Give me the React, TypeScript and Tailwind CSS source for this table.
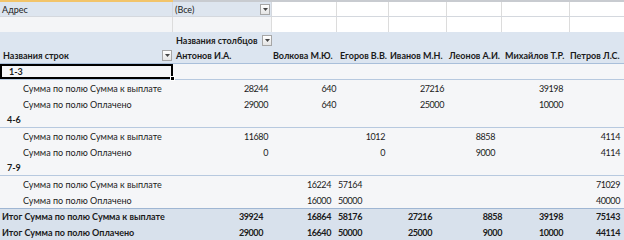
const font = { fontFamily: 'Lato, "Open Sans", sans-serif' };

function Drop() {
  return (
    <span className="flex h-[11px] w-[10px] items-center justify-center border border-[#a6a6a6] bg-gradient-to-b from-white to-[#e4e4e4]">
      <svg width="5" height="3" viewBox="0 0 5 3">
        <path d="M0 0h5L2.5 3z" fill="#444" />
      </svg>
    </span>
  );
}

type Row = {
  label: string;
  kind: 'group' | 'item' | 'total';
  vals: string[];
  pads: string[];
};

const padsA = ['pr-[4px]', 'pr-[1px]', 'pr-[4px]', 'pr-[3px]', 'pr-[7px]', 'pr-[7px]', 'pr-[4px]'];
const padsC = ['pr-[4px]', 'pr-[6px]', 'pr-[27px]', 'pr-[3px]', 'pr-[7px]', 'pr-[7px]', 'pr-[4px]'];
const padsT = ['pr-[9px]', 'pr-[6px]', 'pr-[27px]', 'pr-[15px]', 'pr-0', 'pr-[7px]', 'pr-[4px]'];

const rows: Row[] = [
  { label: '1-3', kind: 'group', vals: [], pads: [] },
  { label: 'Сумма по полю Сумма к выплате', kind: 'item', vals: ['28244', '640', '', '27216', '', '39198', ''], pads: padsA },
  { label: 'Сумма по полю Оплачено', kind: 'item', vals: ['29000', '640', '', '25000', '', '10000', ''], pads: padsA },
  { label: '4-6', kind: 'group', vals: [], pads: [] },
  { label: 'Сумма по полю Сумма к выплате', kind: 'item', vals: ['11680', '', '1012', '', '8858', '', '4114'], pads: padsA },
  { label: 'Сумма по полю Оплачено', kind: 'item', vals: ['0', '', '0', '', '9000', '', '4114'], pads: padsA },
  { label: '7-9', kind: 'group', vals: [], pads: [] },
  { label: 'Сумма по полю Сумма к выплате', kind: 'item', vals: ['', '16224', '57164', '', '', '', '71029'], pads: padsC },
  { label: 'Сумма по полю Оплачено', kind: 'item', vals: ['', '16000', '50000', '', '', '', '40000'], pads: padsC },
  { label: 'Итог Сумма по полю Сумма к выплате', kind: 'total', vals: ['39924', '16864', '58176', '27216', '8858', '39198', '75143'], pads: padsT },
  { label: 'Итог Сумма по полю Оплачено', kind: 'total', vals: ['29000', '16640', '50000', '25000', '9000', '10000', '44114'], pads: padsT },
];

const names = [
  { n: 'Антонов И.А.', c: 'pl-[3px]' },
  { n: 'Волкова М.Ю.', c: 'pl-[1px]' },
  { n: 'Егоров В.В.', c: 'pl-[3px]' },
  { n: 'Иванов М.Н.', c: 'pl-[1px]' },
  { n: 'Леонов А.И.', c: 'pl-[2px]' },
  { n: 'Михайлов Т.Р.', c: 'pl-[3px]' },
  { n: 'Петров Л.С.', c: 'pl-0' },
];

const grid = 'grid grid-cols-[173px_99px_65px_52px_58px_55px_68px_54px]';

export default function App() {
  return (
    <div className="h-[240px] w-[624px] overflow-hidden bg-white text-[9px] leading-none text-[#1b1b1b]" style={font}>
      <div className="flex h-[2px]">
        <div className="w-[173px] bg-[#f2c46a]" />
        <div className="flex-1 bg-[#c8cbd0]" />
      </div>

      <div className={`${grid} h-[15px] border-b border-[#d4d8de]`}>
        <div className="flex items-center border-r border-[#d4d8de] bg-[#dde5ef] pl-[2px]">Адрес</div>
        <div className="flex items-center justify-between border-r border-[#d4d8de] bg-[#dde5ef] pl-[2px] pr-[1px]">
          (Все)
          <Drop />
        </div>
        <div className="border-r border-[#dcdcdc]" />
        <div className="border-r border-[#dcdcdc]" />
        <div className="border-r border-[#dcdcdc]" />
        <div className="border-r border-[#dcdcdc]" />
        <div className="border-r border-[#dcdcdc]" />
        <div />
      </div>

      <div className={`${grid} h-[15px]`}>
        <div className="border-r border-[#dcdcdc] bg-[#f4f5f7]" />
        <div className="border-r border-[#dcdcdc] bg-[#f4f5f7]" />
        <div className="border-r border-[#dcdcdc]" />
        <div className="border-r border-[#dcdcdc]" />
        <div className="border-r border-[#dcdcdc]" />
        <div className="border-r border-[#dcdcdc]" />
        <div className="border-r border-[#dcdcdc]" />
        <div />
      </div>

      <div className={`${grid} h-[16px] bg-[#dce5f0] font-bold`}>
        <div />
        <div className="col-span-7 flex items-center gap-[5px] pl-[3px]">
          Названия столбцов
          <Drop />
        </div>
      </div>

      <div className={`${grid} h-[16px] border-b border-[#a9bfda] bg-[#dce5f0] font-bold`}>
        <div className="flex items-center justify-between pl-[3px] pr-[1px]">
          Названия строк
          <Drop />
        </div>
        {names.map((h) => (
          <div key={h.n} className={`flex items-center whitespace-nowrap ${h.c}`}>
            {h.n}
          </div>
        ))}
      </div>

      {rows.map((r, i) => {
        if (r.kind === 'group') {
          const first = i === 0;
          return (
            <div key={i} className={`${grid} h-[16px] border-b border-[#b7c9df] bg-[#f5f6f8] font-bold`}>
              <div className={`relative flex items-center pl-[7px] ${first ? 'border-2 border-black' : ''}`}>
                {r.label}
                {first && <span className="absolute -bottom-[4px] -right-[4px] h-[5px] w-[5px] border border-white bg-black" />}
              </div>
            </div>
          );
        }
        const total = r.kind === 'total';
        return (
          <div
            key={i}
            className={`${grid} h-[16px] ${total ? 'bg-[#d8e1ec] font-bold' : 'bg-[#f5f6f8]'} ${
              i === 9 ? 'border-t border-[#9fb6d3]' : ''
            }`}
          >
            <div className={`flex items-center whitespace-nowrap ${total ? 'pl-[2px]' : 'pl-[23px]'}`}>{r.label}</div>
            {r.vals.map((v, j) => (
              <div key={j} className={`flex items-center justify-end tracking-[-0.4px] ${r.pads[j]}`}>
                {v}
              </div>
            ))}
          </div>
        );
      })}
    </div>
  );
}
